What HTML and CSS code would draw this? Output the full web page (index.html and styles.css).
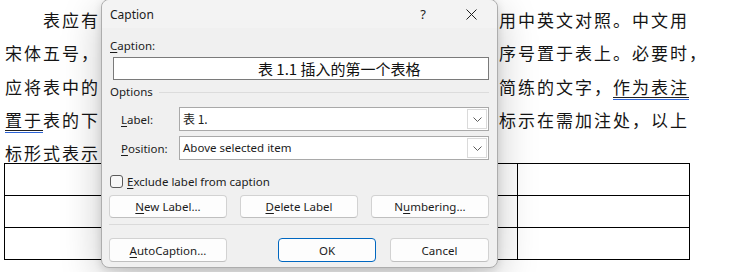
FILE: index.html
```html
<!DOCTYPE html>
<html lang="zh-CN">
<head>
    <meta charset="UTF-8">
    <meta name="viewport" content="width=device-width, initial-scale=1.0">
    <title>Caption</title>
    <link rel="stylesheet" href="styles.css">
</head>
<body>
    <!-- Document page behind the dialog (middle of each line is covered) -->
    <div class="page">
        <div class="para">
            <div class="line first"><span>表应有</span><span>用中英文对照。中文用</span></div>
            <div class="line hang"><span>宋体五号，</span><span>序号置于表上。必要时，</span></div>
            <div class="line"><span>应将表中的</span><span>简练的文字，<span class="ul"><span class="ul-blue">作为表注</span></span></span></div>
            <div class="line"><span><span class="ul"><span class="ul-blue">置于</span></span>表的下</span><span>标示在需加注处，以上</span></div>
            <div class="line"><span>标形式表示</span></div>
        </div>
        <table class="doc-table">
            <tr><td class="wide"></td><td></td></tr>
            <tr><td class="wide"></td><td></td></tr>
            <tr><td class="wide"></td><td></td></tr>
        </table>
    </div>

    <!-- Caption dialog -->
    <div class="dialog" role="dialog" aria-labelledby="dialog-title">
        <div class="title-bar">
            <span id="dialog-title" class="title">Caption</span>
            <button class="title-btn help" aria-label="Help">?</button>
            <button class="title-btn close" aria-label="Close">
                <svg width="11" height="11" viewBox="0 0 11 11"><path d="M0.5 0.5 L10.5 10.5 M10.5 0.5 L0.5 10.5" stroke="#1f1f1f" stroke-width="1" fill="none"/></svg>
            </button>
        </div>

        <div class="dialog-body">
            <div class="field-label"><u>C</u>aption:</div>
            <div class="caption-box">表 1.1 插入的第一个表格</div>

            <div class="group-head"><span>Options</span></div>

            <div class="opt-row first">
                <span class="opt-label"><u>L</u>abel:</span>
                <div class="combo">
                    <span class="combo-text cjk">表 1.</span>
                    <span class="combo-btn"><svg width="9" height="5" viewBox="0 0 9 5"><path d="M0.5 0.5 L4.5 4.5 L8.5 0.5" stroke="#5c5c5c" stroke-width="1" fill="none"/></svg></span>
                </div>
            </div>
            <div class="opt-row">
                <span class="opt-label"><u>P</u>osition:</span>
                <div class="combo">
                    <span class="combo-text">Above selected item</span>
                    <span class="combo-btn"><svg width="9" height="5" viewBox="0 0 9 5"><path d="M0.5 0.5 L4.5 4.5 L8.5 0.5" stroke="#5c5c5c" stroke-width="1" fill="none"/></svg></span>
                </div>
            </div>

            <div class="check-row">
                <span class="check"></span>
                <span><u>E</u>xclude label from caption</span>
            </div>

            <div class="btn-grid">
                <button class="btn"><u>N</u>ew Label...</button>
                <button class="btn"><u>D</u>elete Label</button>
                <button class="btn">N<u>u</u>mbering...</button>
            </div>

            <hr class="sep">

            <div class="btn-row">
                <button class="btn auto"><u>A</u>utoCaption...</button>
                <button class="btn ok">OK</button>
                <button class="btn cancel">Cancel</button>
            </div>
        </div>
    </div>
</body>
</html>
```

FILE: styles.css
```css
/* Page */
body, html {
    margin: 0;
    height: 100%;
    background: #fff;
    overflow: hidden;
}

body {
    position: relative;
    font-family: "Noto Sans CJK SC", sans-serif;
}

.page {
    padding-left: 5px;
}

.para {
    padding-top: 3px;
    height: 160px;
    font-size: 17px;
    letter-spacing: 2px;
    white-space: nowrap;
    color: #151515;
}

.line {
    display: flex;
    justify-content: space-between;
    width: 684px;
    height: 33.25px;
    line-height: 33.25px;
}

.line.first {
    padding-left: 38px;
    box-sizing: border-box;
}

.line.hang {
    width: 703px;
}

.ul {
    text-decoration: underline #222 1px;
    text-underline-offset: 3px;
}

.ul-blue {
    text-decoration: underline #2d64d8 1px;
    text-underline-offset: 5px;
}

.doc-table {
    margin-left: -1px;
    width: 686px;
    border-collapse: collapse;
}

.doc-table td {
    border: 1px solid #000;
    height: 31px;
    padding: 0;
}

.doc-table .wide {
    width: 512px;
}

/* Dialog */
.dialog {
    position: absolute;
    left: 101px;
    top: -1px;
    width: 397px;
    box-sizing: border-box;
    border: 1px solid #adadad;
    border-radius: 8px;
    background: #f0f0f0;
    box-shadow: 0 12px 40px rgba(0, 0, 0, 0.22), 0 2px 8px rgba(0, 0, 0, 0.12);
    font-family: "Segoe UI", "Noto Sans", sans-serif;
    font-size: 11.5px;
    color: #1b1b1b;
}

.dialog u {
    text-underline-offset: 2px;
}

.title-bar {
    display: flex;
    align-items: center;
    height: 28px;
    background: #f3f3f3;
    border-radius: 8px 8px 0 0;
}

.title {
    flex: 1;
    padding-left: 8px;
    font-size: 12px;
}

.title-btn {
    height: 28px;
    border: none;
    background: none;
    padding: 0;
    font-family: inherit;
    color: #1b1b1b;
    display: flex;
    align-items: center;
    justify-content: center;
}

.help {
    width: 46px;
    font-size: 13px;
}

.close {
    width: 51px;
}

.dialog-body {
    padding: 0 8px 5px 7px;
}

.field-label {
    margin-top: 10px;
    padding-left: 1px;
    line-height: 16px;
}

.caption-box {
    margin: 3px 0 0 4px;
    height: 23px;
    box-sizing: border-box;
    border: 1px solid #7a7a7a;
    background: #fff;
    padding-left: 144px;
    font-family: "Noto Sans CJK SC", sans-serif;
    font-size: 15px;
    line-height: 21px;
    color: #111;
}

.group-head {
    display: flex;
    align-items: center;
    gap: 6px;
    margin-top: 4px;
    padding-left: 1px;
    line-height: 16px;
}

.group-head::after {
    content: "";
    flex: 1;
    border-top: 1px solid #dcdcdc;
}

.opt-row {
    display: flex;
    align-items: center;
    margin-top: 5px;
    padding-left: 12px;
}

.opt-row.first {
    margin-top: 7px;
}

.opt-label {
    width: 58px;
}

.combo {
    flex: 1;
    display: flex;
    height: 24px;
    box-sizing: border-box;
    border: 1px solid #a9a9a9;
    background: #fff;
}

.combo-text {
    flex: 1;
    padding-left: 3px;
    line-height: 22px;
}

.combo-text.cjk {
    font-family: "Noto Sans CJK SC", sans-serif;
    font-size: 12px;
}

.combo-btn {
    width: 18px;
    margin: 1px;
    border: 1px solid #dadada;
    display: flex;
    align-items: center;
    justify-content: center;
}

.check-row {
    display: flex;
    align-items: center;
    gap: 4px;
    margin-top: 13px;
    height: 16px;
    padding-left: 1px;
}

.check {
    width: 13px;
    height: 13px;
    box-sizing: border-box;
    border: 1px solid #5a5a5a;
    border-radius: 3px;
    background: #f7f7f7;
}

.btn {
    height: 23px;
    padding: 0;
    border: 1px solid #d2d2d2;
    border-bottom-color: #bfbfbf;
    border-radius: 4px;
    background: #fdfdfd;
    font-family: inherit;
    font-size: 11.5px;
    color: #1b1b1b;
}

.btn-grid {
    display: grid;
    grid-template-columns: repeat(3, 1fr);
    gap: 13px;
    margin-top: 6px;
}

.sep {
    margin: 6px 0 0;
    border: 0;
    border-top: 1px solid #dadada;
}

.btn-row {
    display: flex;
    gap: 14px;
    margin-top: 13px;
}

.btn-row .btn {
    height: 24px;
}

.auto {
    width: 118px;
    margin-right: auto;
}

.ok {
    width: 98px;
    border-color: #0067c0;
}

.cancel {
    width: 99px;
}
```
